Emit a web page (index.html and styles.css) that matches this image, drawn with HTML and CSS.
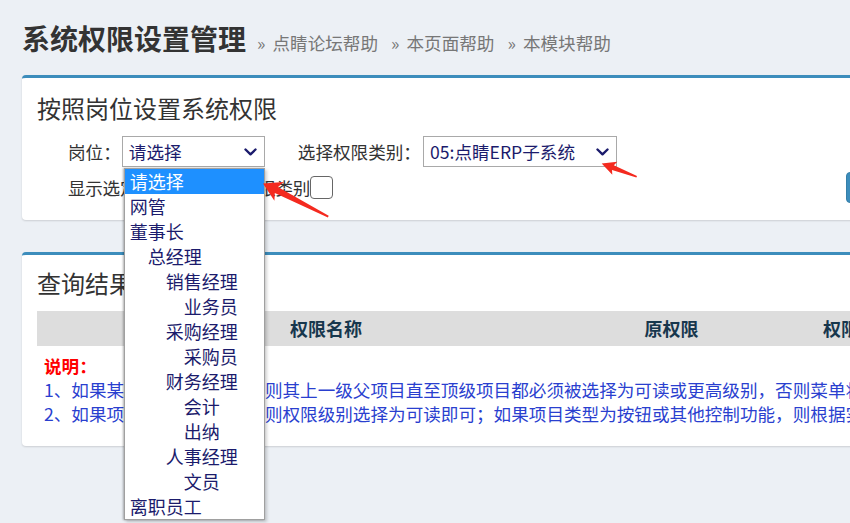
FILE: index.html
```html
<!DOCTYPE html>
<html lang="zh-CN">
<head>
<meta charset="utf-8">
<title>系统权限设置管理</title>
<link rel="stylesheet" href="styles.css">
</head>
<body>
<div class="page">
  <header class="content-header">
    <h1 class="page-title">系统权限设置管理</h1>
    <nav class="help-links">
      <a class="help-link" href="#"><span class="raquo">»</span>点睛论坛帮助</a>
      <a class="help-link" href="#"><span class="raquo">»</span>本页面帮助</a>
      <a class="help-link" href="#"><span class="raquo">»</span>本模块帮助</a>
    </nav>
  </header>

  <section class="box">
    <h2 class="box-title">按照岗位设置系统权限</h2>
    <div class="form-row">
      <span class="field-label">岗位：</span>
      <div class="select select-post">
        <span class="select-value">请选择</span>
        <svg class="chevron" width="13" height="8" viewBox="0 0 13 8"><path d="M1.5 1.5 L6.5 6.3 L11.5 1.5"/></svg>
        <ul class="dropdown">
          <li class="option is-active">请选择</li>
          <li class="option">网管</li>
          <li class="option">董事长</li>
          <li class="option lv1">总经理</li>
          <li class="option lv2">销售经理</li>
          <li class="option lv3">业务员</li>
          <li class="option lv2">采购经理</li>
          <li class="option lv3">采购员</li>
          <li class="option lv2">财务经理</li>
          <li class="option lv3">会计</li>
          <li class="option lv3">出纳</li>
          <li class="option lv2">人事经理</li>
          <li class="option lv3">文员</li>
          <li class="option">离职员工</li>
        </ul>
      </div>
      <span class="field-label field-spaced">选择权限类别：</span>
      <div class="select select-category">
        <span class="select-value">05:点睛ERP子系统</span>
        <svg class="chevron" width="13" height="8" viewBox="0 0 13 8"><path d="M1.5 1.5 L6.5 6.3 L11.5 1.5"/></svg>
      </div>
    </div>
    <div class="form-row">
      <span class="field-label field-tight">显示选定岗位已分配的权限类别</span>
      <input class="checkbox" type="checkbox">
      <button class="btn-primary" type="button">查询</button>
    </div>
  </section>

  <section class="box box-results">
    <h2 class="box-title">查询结果</h2>
    <div class="perm-table">
      <div class="th">权限名称</div>
      <div class="th">原权限</div>
      <div class="th">权限级别</div>
      <div class="th">操作</div>
    </div>
    <div class="notes">
      <p class="notes-title">说明：</p>
      <p>1、如果某项目类型是菜单，则其上一级父项目直至顶级项目都必须被选择为可读或更高级别，否则菜单将无法显示。</p>
      <p>2、如果项目类型为菜单项，则权限级别选择为可读即可；如果项目类型为按钮或其他控制功能，则根据实际需要选择。</p>
    </div>
  </section>
</div>

<!-- red callout arrows drawn over the form -->
<svg class="annotations" width="850" height="523" viewBox="0 0 850 523">
  <polygon points="263,183.5 283.8,181.9 278,186.9 328.7,215.8 327.9,217.6 274.8,193.1 274.4,200.7"/>
  <polygon points="601.7,163.5 617.3,161.8 613.8,165.3 637,176 636.4,177.5 612,169.9 612.3,174.8"/>
</svg>
</body>
</html>
```
FILE: styles.css
```css
html, body {
  margin: 0;
  height: 100%;
  overflow: hidden;
}

body {
  background: #ecf0f5;
  font-family: "Noto Sans CJK SC", "Microsoft YaHei", sans-serif;
  color: #333;
  position: relative;
}

.page {
  width: 1100px;
  padding: 18px 0 0 22px;
}

/* page header */
.content-header {
  display: flex;
  align-items: baseline;
  height: 42px;
}

.page-title {
  margin: 0;
  font-size: 28px;
  line-height: 40px;
  font-weight: 700;
  color: #333;
}

.help-links {
  display: flex;
  margin-left: -2px;
}

.help-link {
  margin-left: 13px;
  font-size: 17.6px;
  color: #777;
  text-decoration: none;
}

.raquo {
  margin-right: 7px;
}

/* boxes */
.box {
  margin-top: 15px;
  background: #fff;
  border-top: 3px solid #3c8dbc;
  border-radius: 4px 0 0 4px;
  box-shadow: 0 1px 2px rgba(0, 0, 0, 0.14);
  padding: 14px 0 17px 15px;
}

.box-results {
  margin-top: 32px;
  padding: 12px 0 20px 15px;
}

.box-title {
  margin: 0;
  font-size: 24px;
  line-height: 32px;
  font-weight: 400;
  color: #333;
}

/* form */
.form-row {
  display: flex;
  align-items: center;
  height: 31px;
  margin-top: 5px;
  padding-left: 31px;
}

.box-title + .form-row {
  margin-top: 12px;
}

.field-label {
  font-size: 17.6px;
  color: #333;
  white-space: nowrap;
}

.field-spaced {
  margin-left: 33px;
}

.field-tight {
  letter-spacing: -0.3px;
}

.select {
  position: relative;
  box-sizing: border-box;
  height: 31px;
  margin-left: 2px;
  padding: 0 7px 0 6px;
  border: 1px solid #a9a9a9;
  background: #fff;
  display: flex;
  align-items: center;
  justify-content: space-between;
  font-size: 17.6px;
  color: #1b1b6c;
  white-space: nowrap;
}

.select-post {
  width: 143px;
  margin-left: 1px;
}

.select-category {
  width: 194px;
}

.chevron {
  flex: none;
}

.chevron path {
  fill: none;
  stroke: #1b1b6c;
  stroke-width: 2.4;
  stroke-linecap: round;
  stroke-linejoin: round;
}

/* open option list of the post select */
.dropdown {
  position: absolute;
  left: 1px;
  top: 31px;
  z-index: 10;
  box-sizing: border-box;
  width: 141px;
  margin: 0;
  padding: 0;
  list-style: none;
  background: #fff;
  border: 1px solid #a0a0a0;
  box-shadow: 2px 2px 3px rgba(0, 0, 0, 0.18), -1px 0 2px rgba(0, 0, 0, 0.3);
}

.option {
  height: 25px;
  line-height: 25px;
  padding-left: 5px;
  font-size: 18px;
  color: #1b1b6c;
}

.option.lv1 { padding-left: 23px; }
.option.lv2 { padding-left: 41px; }
.option.lv3 { padding-left: 59px; }

.option.is-active {
  background: #1e90ff;
  color: #fff;
}

.checkbox {
  appearance: none;
  -webkit-appearance: none;
  box-sizing: border-box;
  width: 23px;
  height: 23px;
  margin: 0;
  border: 1.5px solid #666;
  border-radius: 4px;
  background: #fff;
}

.btn-primary {
  margin-left: 513px;
  height: 31px;
  width: 80px;
  border: 1px solid #367fa9;
  border-radius: 4px;
  background: #3c8dbc;
  color: #fff;
  font-family: inherit;
  font-size: 16px;
}

/* result table */
.perm-table {
  display: grid;
  grid-template-columns: 578px 113px 262px 120px;
  height: 35px;
  margin-top: 12px;
  background: #ddd;
}

.th {
  text-align: center;
  line-height: 35px;
  font-size: 18px;
  font-weight: 700;
  color: #17374d;
  white-space: nowrap;
}

.notes {
  margin-top: 8px;
  padding-left: 7px;
}

.notes p {
  margin: 0;
  font-size: 17.6px;
  line-height: 24px;
  color: #2a3fcf;
  white-space: nowrap;
}

.notes .notes-title {
  color: #f00;
  font-weight: 700;
}

/* callout arrows */
.annotations {
  position: absolute;
  left: 0;
  top: 0;
  z-index: 20;
  pointer-events: none;
}

.annotations polygon {
  fill: #f42a1f;
}
```
